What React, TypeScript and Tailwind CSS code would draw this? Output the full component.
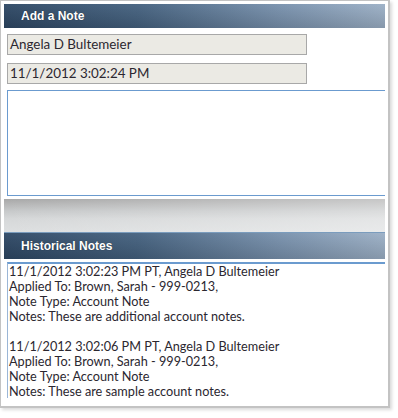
const notes = [
  {
    stamp: "11/1/2012 3:02:23 PM PT, Angela D Bultemeier",
    appliedTo: "Brown, Sarah - 999-0213,",
    type: "Account Note",
    text: "These are additional account notes.",
  },
  {
    stamp: "11/1/2012 3:02:06 PM PT, Angela D Bultemeier",
    appliedTo: "Brown, Sarah - 999-0213,",
    type: "Account Note",
    text: "These are sample account notes.",
  },
];

function SectionHeader({ title, topLine }: { title: string; topLine?: boolean }) {
  return (
    <div
      className={`flex items-center pl-[17px] font-['Liberation_Sans',Arial,sans-serif] text-[12px] font-bold text-white [text-shadow:0_0_1px_rgba(0,0,0,0.5)] bg-[linear-gradient(to_bottom,rgba(255,255,255,0.05),rgba(0,0,0,0.14)),linear-gradient(100deg,#2d4764_0%,#44617f_35%,#7891ad_72%,#9db1c7_100%)] ${
        topLine ? "h-[27px] border-t border-[#7a9cbd]" : "h-[24px]"
      }`}
    >
      {title}
    </div>
  );
}

function ReadOnlyField({ value }: { value: string }) {
  return (
    <div className="ml-[3px] flex h-[21px] w-[300px] items-center border border-[#a8a8a8] bg-[#ebeae4] pl-[2px] text-[13.4px] text-[#2b2730]">
      {value}
    </div>
  );
}

export default function App() {
  return (
    <div className="h-[418px] w-[398px] bg-white font-['Lato','Open_Sans',sans-serif] text-[12.7px]">
      <div className="flex h-[408px] w-[390px] flex-col border-l border-t border-r-2 border-b-2 border-[#c3c3c3] bg-white px-[3px] pt-[3px] shadow-[2px_2px_3px_rgba(0,0,0,0.15)]">
        <SectionHeader title="Add a Note" />
        <div className="mt-[6px]">
          <ReadOnlyField value="Angela D Bultemeier" />
        </div>
        <div className="mt-[8px]">
          <ReadOnlyField value="11/1/2012 3:02:24 PM" />
        </div>
        <div className="ml-[3px] mt-[6px] h-[106px] border-y border-l border-[#6b9bcf]" />
        <div className="mt-[3px] h-[33px] bg-[linear-gradient(to_right,rgba(255,255,255,0),rgba(255,255,255,0.35)),linear-gradient(to_bottom,#a8a8a8_0%,#c6c8c9_35%,#d6d8d9_60%,#dddfe0_100%)]" />
        <SectionHeader title="Historical Notes" topLine />
        <div className="ml-[3px] mt-[3px] flex h-[136px] flex-col overflow-hidden border-l border-t-2 border-l-[#9bb6d6] border-t-[#6b9bcf] pl-[1px] leading-[15px] text-[#2b2730]">
          {notes.map((n, i) => (
            <div key={i} className={i > 0 ? "mt-[15px]" : ""}>
              <div>{n.stamp}</div>
              <div>Applied To: {n.appliedTo}</div>
              <div>Note Type: {n.type}</div>
              <div>Notes: {n.text}</div>
            </div>
          ))}
        </div>
      </div>
    </div>
  );
}
